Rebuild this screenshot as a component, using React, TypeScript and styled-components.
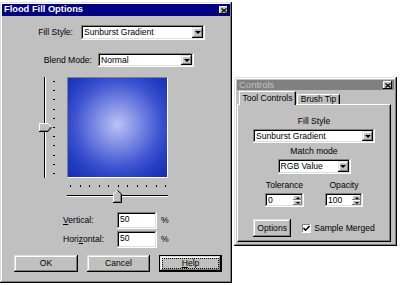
import React from 'react';
import styled, { createGlobalStyle, css } from 'styled-components';

const GlobalStyle = createGlobalStyle`
  html, body { margin: 0; padding: 0; background: #fff; }
  body {
    font-family: "Liberation Sans", Arial, sans-serif;
    font-size: 8.6px;
    color: #000;
  }
`;

const raised = css`
  box-shadow: inset -1px -1px #000, inset 1px 1px #dfdfdf, inset -2px -2px #808080, inset 2px 2px #fff;
`;

const sunken = css`
  box-shadow: inset -1px -1px #fff, inset 1px 1px #808080, inset -2px -2px #dfdfdf, inset 2px 2px #000;
`;

const Desktop = styled.div`
  position: relative;
  width: 400px;
  height: 285px;
  overflow: hidden;
  background: #fff;
`;

// windows sit on a free desktop, so their place is absolute
const Window = styled.div<{ $x: number; $y: number; $w: number; $h: number; $pad: number }>`
  position: absolute;
  left: ${p => p.$x}px;
  top: ${p => p.$y}px;
  width: ${p => p.$w}px;
  height: ${p => p.$h}px;
  box-sizing: border-box;
  padding: ${p => p.$pad}px;
  background: #c0c0c0;
  ${raised};
  display: flex;
  flex-direction: column;
`;

const TitleBar = styled.div<{ $active?: boolean; $h: number }>`
  height: ${p => p.$h}px;
  flex: none;
  display: flex;
  align-items: center;
  justify-content: space-between;
  padding: 0 2px 0 2px;
  background: ${p => (p.$active ? '#000080' : '#808080')};
  color: ${p => (p.$active ? '#fff' : '#c0c0c0')};
  font-weight: ${p => (p.$active ? 'bold' : 'normal')};
  font-size: ${p => (p.$active ? '9.3px' : '9.5px')};
  line-height: 1;
  white-space: nowrap;
`;

const CloseBtn = styled.div`
  width: 9px;
  height: 8px;
  box-sizing: border-box;
  background: #c0c0c0;
  box-shadow: inset -1px -1px #000, inset 1px 1px #fff;
  display: flex;
  align-items: center;
  justify-content: center;
`;

const Row = styled.div<{ $mt: number; $h: number; $pl?: number; $gap?: number }>`
  margin-top: ${p => p.$mt}px;
  height: ${p => p.$h}px;
  padding-left: ${p => p.$pl ?? 0}px;
  display: flex;
  align-items: center;
  gap: ${p => p.$gap ?? 0}px;
  flex: none;
`;

const Label = styled.div<{ $w?: number; $right?: boolean }>`
  width: ${p => (p.$w ? `${p.$w}px` : 'auto')};
  text-align: ${p => (p.$right ? 'right' : 'left')};
  white-space: nowrap;
  line-height: 11px;
`;

const Field = styled.div<{ $w: number; $h: number; $top?: boolean }>`
  width: ${p => p.$w}px;
  height: ${p => p.$h}px;
  box-sizing: border-box;
  padding: 2px;
  background: #fff;
  ${sunken};
  display: flex;
  align-items: ${p => (p.$top ? 'flex-start' : 'center')};
  flex: none;
`;

const FieldText = styled.span<{ $top?: boolean }>`
  flex: 1;
  padding-left: 1px;
  padding-top: ${p => (p.$top ? 1 : 0)}px;
  white-space: nowrap;
  overflow: hidden;
  line-height: 1;
`;

const ArrowBtn = styled.div`
  width: 11px;
  align-self: stretch;
  box-sizing: border-box;
  background: #c0c0c0;
  ${raised};
  display: flex;
  align-items: center;
  justify-content: center;
`;

const DownTri = styled.span<{ $s?: number }>`
  width: 0;
  height: 0;
  border-left: ${p => p.$s ?? 3}px solid transparent;
  border-right: ${p => p.$s ?? 3}px solid transparent;
  border-top: ${p => p.$s ?? 3}px solid #000;
`;

const UpTri = styled.span`
  width: 0;
  height: 0;
  border-left: 2px solid transparent;
  border-right: 2px solid transparent;
  border-bottom: 2px solid #000;
`;

const SpinBtns = styled.div`
  width: 9px;
  align-self: stretch;
  display: flex;
  flex-direction: column;
`;

const SpinBtn = styled.div`
  flex: 1;
  background: #c0c0c0;
  box-shadow: inset -1px -1px #808080, inset 1px 1px #fff;
  display: flex;
  align-items: center;
  justify-content: center;
`;

const Preview = styled.div`
  width: 101px;
  height: 101px;
  box-sizing: border-box;
  border: 1px solid;
  border-color: #808080 #fff #fff #808080;
  background: radial-gradient(circle farthest-corner at 50% 47%,
    #bcc3f4 0%, #9aa5eb 16%, #6c7cdf 38%, #3d53d0 60%, #2540c4 76%, #142bb2 100%);
`;

const Button = styled.div<{ $w: number; $h: number; $default?: boolean }>`
  width: ${p => p.$w}px;
  height: ${p => p.$h}px;
  box-sizing: border-box;
  background: #c0c0c0;
  ${raised};
  ${p => p.$default && css`
    border: 1px solid #000;
  `}
  display: flex;
  align-items: center;
  justify-content: center;
  line-height: 1;
  flex: none;
`;

const FocusRect = styled.div`
  margin: 2px;
  align-self: stretch;
  flex: 1;
  border: 1px dotted #000;
  display: flex;
  align-items: center;
  justify-content: center;
`;

const TabStrip = styled.div`
  display: flex;
  align-items: flex-end;
  height: 14px;
  margin-top: 0;
  padding-left: 2px;
  gap: 1px;
  flex: none;
`;

const Tab = styled.div<{ $active?: boolean; $w: number }>`
  position: relative;
  z-index: ${p => (p.$active ? 2 : 1)};
  width: ${p => p.$w}px;
  height: ${p => (p.$active ? 14 : 10)}px;
  box-sizing: border-box;
  background: #c0c0c0;
  border-top: 1px solid #fff;
  border-left: 1px solid #fff;
  border-right: 1px solid #000;
  box-shadow: inset -1px 0 #808080;
  margin-bottom: ${p => (p.$active ? -1 : 0)}px;
  display: flex;
  align-items: ${p => (p.$active ? 'flex-start' : 'center')};
  padding-top: ${p => (p.$active ? 2 : 0)}px;
  justify-content: center;
  line-height: 1;
  white-space: nowrap;
  font-size: ${p => (p.$active ? '8.6px' : '8.4px')};
`;

const TabPanel = styled.div`
  width: 154px;
  height: 138px;
  box-sizing: border-box;
  border-top: 1px solid #fff;
  border-left: 1px solid #fff;
  border-right: 1px solid #000;
  border-bottom: 1px solid #000;
  box-shadow: inset -1px -1px #808080;
  display: flex;
  flex-direction: column;
  align-items: center;
`;

const Stack = styled.div<{ $mt: number }>`
  margin-top: ${p => p.$mt}px;
  display: flex;
  flex-direction: column;
  align-items: center;
`;

const Columns = styled.div<{ $mt: number; $gap: number }>`
  margin-top: ${p => p.$mt}px;
  display: flex;
  gap: ${p => p.$gap}px;
`;

const Column = styled.div`
  display: flex;
  flex-direction: column;
  align-items: center;
  gap: 2px;
`;

const CheckBox = styled.div`
  width: 9px;
  height: 9px;
  box-sizing: border-box;
  background: #fff;
  box-shadow: inset -1px -1px #fff, inset 1px 1px #808080;
  display: flex;
  align-items: center;
  justify-content: center;
`;

const X = () => (
  <svg width="6" height="5" viewBox="0 0 6 5">
    <path d="M0.5 0.5 L5.5 4.5 M5.5 0.5 L0.5 4.5" stroke="#000" strokeWidth="1.2" />
  </svg>
);

const Dropdown = ({ w, h, text }: { w: number; h: number; text: string }) => (
  <Field $w={w} $h={h}>
    <FieldText>{text}</FieldText>
    <ArrowBtn>
      <DownTri />
    </ArrowBtn>
  </Field>
);

const Spinner = ({ w, value }: { w: number; value: string }) => (
  <Field $w={w} $h={14}>
    <FieldText>{value}</FieldText>
    <SpinBtns>
      <SpinBtn><UpTri /></SpinBtn>
      <SpinBtn><DownTri $s={2} /></SpinBtn>
    </SpinBtns>
  </Field>
);

const VSlider = () => {
  const ticks = Array.from({ length: 11 }, (_, i) => 4 + i * 9.2);
  return (
    <svg width="20" height="101" viewBox="0 0 20 101">
      <rect x="6" y="0" width="1" height="101" fill="#000" />
      <rect x="7" y="0" width="1" height="101" fill="#fff" />
      {ticks.map(t => (
        <rect key={t} x="15" y={Math.round(t)} width="2" height="1" fill="#000" />
      ))}
      <polygon points="1,46 10,46 14,50 10,54 1,54" fill="#c0c0c0" />
      <polyline points="1.5,54 1.5,46.5 10,46.5 13.5,50" fill="none" stroke="#fff" />
      <polyline points="13.5,50 10,54.5 1,54.5" fill="none" stroke="#000" />
      <polyline points="12.5,50 9.7,53.5 2,53.5" fill="none" stroke="#808080" />
    </svg>
  );
};

const HSlider = () => {
  const ticks = Array.from({ length: 11 }, (_, i) => 3 + i * 9.5);
  return (
    <svg width="101" height="21" viewBox="0 0 101 21">
      {ticks.map(t => (
        <rect key={t} x={Math.round(t)} y="3" width="1" height="2" fill="#000" />
      ))}
      <rect x="0" y="13" width="101" height="1" fill="#000" />
      <rect x="0" y="14" width="101" height="1" fill="#fff" />
      <polygon points="46,20 46,12 50.5,8 55,12 55,20" fill="#c0c0c0" />
      <polyline points="46.5,20 46.5,12 50.5,8.5" fill="none" stroke="#fff" />
      <polyline points="50.5,8.5 54.5,12 54.5,20.5 46,20.5" fill="none" stroke="#000" />
      <polyline points="53.5,12.5 53.5,19.5 47,19.5" fill="none" stroke="#808080" />
    </svg>
  );
};

const Check = () => (
  <svg width="7" height="7" viewBox="0 0 7 7">
    <path d="M0.5 3 L2.5 5.2 L6.5 1" fill="none" stroke="#000" strokeWidth="1.6" />
  </svg>
);

const FloodFillOptions = () => (
  <Window $x={0} $y={2} $w={232} $h={281} $pad={2}>
    <TitleBar $active $h={12}>
      <span>Flood Fill Options</span>
      <CloseBtn><X /></CloseBtn>
    </TitleBar>

    <Row $mt={9} $h={15} $gap={8}>
      <Label $w={71} $right>Fill Style:</Label>
      <Dropdown w={124} h={15} text="Sunburst Gradient" />
    </Row>

    <Row $mt={13} $h={14} $gap={6}>
      <Label $w={90} $right>Blend Mode:</Label>
      <Dropdown w={96} h={14} text="Normal" />
    </Row>

    <Row $mt={10} $h={101} $pl={36} $gap={9}>
      <VSlider />
      <Preview />
    </Row>

    <Row $mt={4} $h={21} $pl={65}>
      <HSlider />
    </Row>

    <Row $mt={9} $h={17} $pl={61} $gap={4}>
      <Label $w={50}><u>V</u>ertical:</Label>
      <Field $w={40} $h={17} $top>
        <FieldText $top>50</FieldText>
      </Field>
      <Label>%</Label>
    </Row>

    <Row $mt={2} $h={17} $pl={61} $gap={4}>
      <Label $w={50}>Hori<u>z</u>ontal:</Label>
      <Field $w={40} $h={17} $top>
        <FieldText $top>50</FieldText>
      </Field>
      <Label>%</Label>
    </Row>

    <Row $mt={7} $h={17} $pl={12} $gap={9}>
      <Button $w={64} $h={17}>OK</Button>
      <Button $w={63} $h={17}>Cancel</Button>
      <Button $w={63} $h={17} $default>
        <FocusRect><span><u>H</u>elp</span></FocusRect>
      </Button>
    </Row>
  </Window>
);

const ControlsPalette = () => (
  <Window $x={234} $y={77} $w={163} $h={169} $pad={3}>
    <TitleBar $h={10}>
      <span>Controls</span>
      <CloseBtn><X /></CloseBtn>
    </TitleBar>

    <TabStrip>
      <Tab $active $w={57}>Tool Controls</Tab>
      <Tab $w={43}>Brush Tip</Tab>
    </TabStrip>

    <TabPanel>
      <Stack $mt={11}>
        <Label>Fill Style</Label>
        <Row $mt={2} $h={14}>
          <Dropdown w={122} h={14} text="Sunburst Gradient" />
        </Row>
      </Stack>

      <Stack $mt={3}>
        <Label>Match mode</Label>
        <Row $mt={2} $h={15}>
          <Dropdown w={73} h={15} text="RGB Value" />
        </Row>
      </Stack>

      <Columns $mt={6} $gap={21}>
        <Column>
          <Label>Tolerance</Label>
          <Spinner w={39} value="0" />
        </Column>
        <Column>
          <Label>Opacity</Label>
          <Spinner w={38} value="100" />
        </Column>
      </Columns>

      <Row $mt={12} $h={18}>
        <Button $w={38} $h={18}>Options</Button>
        <Row $mt={0} $h={18} $pl={11} $gap={3}>
          <CheckBox><Check /></CheckBox>
          <Label>Sample Merged</Label>
        </Row>
      </Row>
    </TabPanel>
  </Window>
);

const App = () => (
  <>
    <GlobalStyle />
    <Desktop>
      <FloodFillOptions />
      <ControlsPalette />
    </Desktop>
  </>
);

export default App;
